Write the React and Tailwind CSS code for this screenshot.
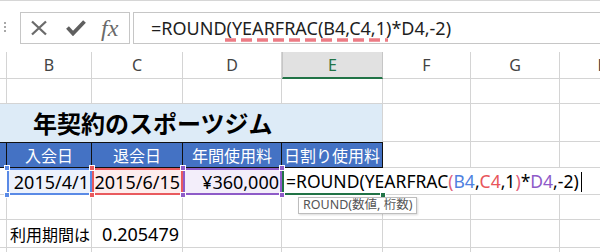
import React from "react";

const COLS = "grid grid-cols-[7px_85px_91px_99px_101px_88px_89px_88px]";
const GL = "border-[#d4d4d4]";

function Corner({ pos, color }) {
  return (
    <span
      className={`absolute z-20 h-[6px] w-[6px] border border-white ${pos}`}
      style={{ backgroundColor: color }}
    />
  );
}

function RangeCell({ color, bg, children }) {
  return (
    <div className="relative flex items-center justify-end pr-[3px] text-[18px] leading-none text-black" style={{ backgroundColor: bg }}>
      <span className="absolute inset-0 border-2" style={{ borderColor: color }} />
      <span className="relative">{children}</span>
      <Corner pos="-left-[3px] -top-[3px]" color={color} />
      <Corner pos="-right-[3px] -top-[3px]" color={color} />
      <Corner pos="-left-[3px] -bottom-[3px]" color={color} />
      <Corner pos="-right-[3px] -bottom-[3px]" color={color} />
    </div>
  );
}

function Blank({ className = "" }) {
  return <div className={`border-r border-b ${GL} ${className}`} />;
}

export default function App() {
  return (
    <div className="relative h-[252px] w-[600px] overflow-hidden bg-white font-['Noto_Sans','Noto_Sans_CJK_JP',sans-serif] text-black">
      {/* formula bar */}
      <div className="flex h-[52px] items-start border-t border-[#d6d6d6] pt-[11px]">
        <div className="flex w-[20px] flex-col items-start gap-[2px] pl-[4px] pt-[10px]">
          <span className="h-[2px] w-[2px] bg-[#a8a8a8]" />
          <span className="h-[2px] w-[2px] bg-[#a8a8a8]" />
          <span className="h-[2px] w-[2px] bg-[#a8a8a8]" />
        </div>
        <div className="flex h-[32px] w-[110px] items-center border border-[#c6c6c6] pl-[9px]">
          <svg width="18" height="16" viewBox="0 0 18 16">
            <path d="M2 1.5 L16 14.5 M16 1.5 L2 14.5" stroke="#6b6b6b" strokeWidth="2.3" fill="none" />
          </svg>
          <svg className="ml-[18px]" width="20" height="16" viewBox="0 0 20 16">
            <path d="M1.5 7.5 L7 13.5 L18.5 1.5" stroke="#5f5f5f" strokeWidth="3.8" fill="none" />
          </svg>
          <span className="ml-[15px] font-['Liberation_Serif',serif] text-[24px] italic leading-none text-[#6a6a6a]">fx</span>
        </div>
        <div className="ml-[3px] flex h-[32px] flex-1 items-center border border-r-0 border-[#c6c6c6] pl-[17px] text-[18px] leading-none text-[#1e1e1e]">
          =ROUND(YEARFRAC(B4,C4,1)*D4,-2)
        </div>
      </div>

      {/* red dashed annotation */}
      <svg className="absolute left-[220px] top-[33px]" width="175" height="20" viewBox="0 0 175 20">
        <defs>
          <filter id="blur" x="-10%" y="-200%" width="120%" height="500%">
            <feGaussianBlur stdDeviation="1.6" />
          </filter>
        </defs>
        <line x1="6" y1="12" x2="168" y2="12" stroke="#9a9a9a" strokeWidth="3.5" strokeDasharray="11 5" filter="url(#blur)" opacity="0.7" />
        <line x1="5" y1="7" x2="168" y2="7" stroke="#ec7b84" strokeWidth="3.5" strokeDasharray="11 5" />
      </svg>

      {/* column headers */}
      <div className={`${COLS} h-[27px] text-[16px] leading-none text-[#444]`}>
        <div className={`border-r border-b ${GL}`} />
        <div className={`flex items-center justify-center border-r border-b ${GL}`}>B</div>
        <div className={`flex items-center justify-center border-r border-b ${GL}`}>C</div>
        <div className={`flex items-center justify-center border-r border-b ${GL}`}>D</div>
        <div className="flex items-center justify-center border-r border-l border-r-[#c6c6c6] border-l-[#c6c6c6] border-b-2 border-b-[#217346] bg-[#e1e1e1] text-[#217346]">E</div>
        <div className={`flex items-center justify-center border-r border-b ${GL}`}>F</div>
        <div className={`flex items-center justify-center border-r border-b ${GL}`}>G</div>
        <div className={`flex items-center justify-center border-r border-b ${GL}`}>H</div>
      </div>

      {/* row: blank */}
      <div className={`${COLS} h-[25px]`}>
        <Blank /><Blank /><Blank /><Blank /><Blank /><Blank /><Blank /><Blank />
      </div>

      {/* row: title */}
      <div className={`${COLS} h-[38px]`}>
        <div className={`col-span-5 flex items-center border-r ${GL} bg-[#ddebf7] pl-[33px] font-['Noto_Sans_CJK_JP',sans-serif] text-[24px] font-bold leading-none text-black`}>
          年契約のスポーツジム
        </div>
        <Blank /><Blank /><Blank />
      </div>

      {/* row: table header */}
      <div className={`${COLS} h-[26px] font-['Noto_Sans_CJK_JP',sans-serif] text-[16px] leading-none text-white`}>
        <div className="border-y border-r border-[#111] bg-[#4472c4]" />
        <div className="flex items-center justify-center border-y border-r border-[#111] bg-[#4472c4]">入会日</div>
        <div className="flex items-center justify-center border-y border-r border-[#111] bg-[#4472c4]">退会日</div>
        <div className="flex items-center justify-center border-y border-r border-[#111] bg-[#4472c4]">年間使用料</div>
        <div className="flex items-center justify-center border-y border-r border-[#111] bg-[#4472c4]">日割り使用料</div>
        <Blank /><Blank /><Blank />
      </div>

      {/* row: data */}
      <div className={`${COLS} h-[27px]`}>
        <div className={`border-b ${GL}`} />
        <RangeCell color="#5a8ae6" bg="#edf2fc">2015/4/1</RangeCell>
        <RangeCell color="#e95a5e" bg="#fdeded">2015/6/15</RangeCell>
        <RangeCell color="#8e5bc8" bg="#f3eefa">¥360,000</RangeCell>
        <div className="relative">
          <span className="absolute inset-0 border-b-2 border-l-2 border-[#217346]" />
          <span className="absolute left-[4px] top-0 z-10 flex h-full items-center whitespace-nowrap text-[17.5px] leading-none text-black">
            =ROUND(YEARFRAC<span className="text-[#e2607a]">(</span>
            <span className="text-[#4f81e0]">B4</span>,
            <span className="text-[#e8555a]">C4</span>,1
            <span className="text-[#e2607a]">)</span>*
            <span className="text-[#8e5ac8]">D4</span>,-2)
            <span className="ml-[2px] inline-block h-[20px] w-px bg-black" />
          </span>
          <Corner pos="-right-[3px] -bottom-[3px]" color="#217346" />
        </div>
        <div className={`border-b ${GL}`} />
        <div className={`border-b ${GL}`} />
        <div className={`border-b ${GL}`} />
      </div>

      {/* row: blank */}
      <div className={`${COLS} h-[25px]`}>
        <Blank /><Blank /><Blank /><Blank /><Blank /><Blank /><Blank /><Blank />
      </div>

      {/* row: 利用期間は */}
      <div className={`${COLS} h-[28px]`}>
        <Blank />
        <div className={`flex items-center border-r border-b ${GL} pl-[3px] font-['Noto_Sans_CJK_JP',sans-serif] text-[16px] leading-none`}>利用期間は</div>
        <div className={`flex items-center justify-end border-r border-b ${GL} pr-[3px] text-[18px] leading-none`}>0.205479</div>
        <Blank /><Blank /><Blank /><Blank /><Blank />
      </div>

      {/* row: blank */}
      <div className={`${COLS} h-[25px]`}>
        <Blank /><Blank /><Blank /><Blank /><Blank /><Blank /><Blank /><Blank />
      </div>

      {/* tooltip */}
      <div className="absolute left-[298px] top-[197px] z-30 flex h-[17px] items-center border border-[#bdbdbd] bg-white px-[4px] font-['Noto_Sans','Noto_Sans_CJK_JP',sans-serif] text-[12.5px] leading-none text-[#555] shadow-[1px_1px_2px_rgba(0,0,0,0.15)]">
        ROUND(数値, 桁数)
      </div>
    </div>
  );
}
